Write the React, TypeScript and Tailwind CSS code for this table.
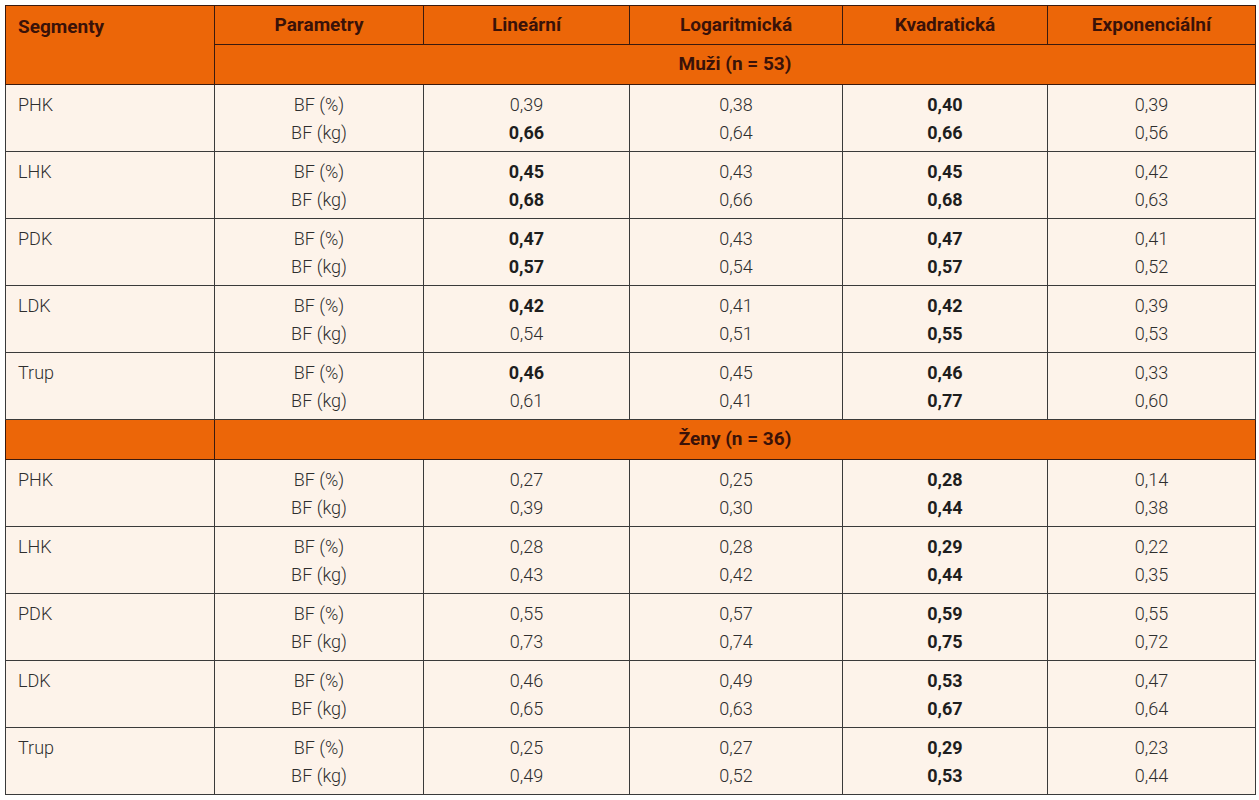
import React from "react";

type Row = { seg: string; pct: [string, boolean][]; kg: [string, boolean][] };

const b = (v: string): [string, boolean] => [v, true];
const n = (v: string): [string, boolean] => [v, false];

const muzi: Row[] = [
  { seg: "PHK", pct: [n("0,39"), n("0,38"), b("0,40"), n("0,39")], kg: [b("0,66"), n("0,64"), b("0,66"), n("0,56")] },
  { seg: "LHK", pct: [b("0,45"), n("0,43"), b("0,45"), n("0,42")], kg: [b("0,68"), n("0,66"), b("0,68"), n("0,63")] },
  { seg: "PDK", pct: [b("0,47"), n("0,43"), b("0,47"), n("0,41")], kg: [b("0,57"), n("0,54"), b("0,57"), n("0,52")] },
  { seg: "LDK", pct: [b("0,42"), n("0,41"), b("0,42"), n("0,39")], kg: [n("0,54"), n("0,51"), b("0,55"), n("0,53")] },
  { seg: "Trup", pct: [b("0,46"), n("0,45"), b("0,46"), n("0,33")], kg: [n("0,61"), n("0,41"), b("0,77"), n("0,60")] },
];

const zeny: Row[] = [
  { seg: "PHK", pct: [n("0,27"), n("0,25"), b("0,28"), n("0,14")], kg: [n("0,39"), n("0,30"), b("0,44"), n("0,38")] },
  { seg: "LHK", pct: [n("0,28"), n("0,28"), b("0,29"), n("0,22")], kg: [n("0,43"), n("0,42"), b("0,44"), n("0,35")] },
  { seg: "PDK", pct: [n("0,55"), n("0,57"), b("0,59"), n("0,55")], kg: [n("0,73"), n("0,74"), b("0,75"), n("0,72")] },
  { seg: "LDK", pct: [n("0,46"), n("0,49"), b("0,53"), n("0,47")], kg: [n("0,65"), n("0,63"), b("0,67"), n("0,64")] },
  { seg: "Trup", pct: [n("0,25"), n("0,27"), b("0,29"), n("0,23")], kg: [n("0,49"), n("0,52"), b("0,53"), n("0,44")] },
];

const headTd = "border border-[#3a1a0e] text-center align-middle";
const bodyTd = "border border-[#3a3a3a] align-top pt-[6px] leading-[28px]";

function DataRows({ rows }: { rows: Row[] }) {
  return (
    <>
      {rows.map((r) => (
        <tr key={r.seg} className="h-[67px]">
          <td className={`${bodyTd} text-left pl-3`}>{r.seg}</td>
          <td className={`${bodyTd} text-center`}>
            <div>BF (%)</div>
            <div>BF (kg)</div>
          </td>
          {r.pct.map((p, i) => (
            <td key={i} className={`${bodyTd} text-center`}>
              <div className={p[1] ? "font-bold text-[#1e1e1e]" : ""}>{p[0]}</div>
              <div className={r.kg[i][1] ? "font-bold text-[#1e1e1e]" : ""}>{r.kg[i][0]}</div>
            </td>
          ))}
        </tr>
      ))}
    </>
  );
}

export default function App() {
  return (
    <div className="w-[1259px] h-[800px] bg-white pt-[5px] pl-[5px]">
      <table
        className="w-[1250px] table-fixed border-collapse bg-[#fdf3ea] text-[18px] font-light text-[#2e2e2e]"
        style={{ fontFamily: "Roboto, 'Liberation Sans', sans-serif" }}
      >
        <colgroup>
          <col className="w-[209px]" />
          <col className="w-[209px]" />
          <col className="w-[206px]" />
          <col className="w-[213px]" />
          <col className="w-[205px]" />
          <col className="w-[208px]" />
        </colgroup>
        <thead>
          <tr className="h-[39px] bg-[#ec6608] font-bold text-[19px] text-[#3a1208]">
            <td rowSpan={2} className="border border-[#3a1a0e] text-left align-top pl-3 pt-[7px]">Segmenty</td>
            <td className={headTd}>Parametry</td>
            <td className={headTd}>Lineární</td>
            <td className={headTd}>Logaritmická</td>
            <td className={headTd}>Kvadratická</td>
            <td className={headTd}>Exponenciální</td>
          </tr>
          <tr className="h-[40px] bg-[#ec6608] font-bold text-[19px] text-[#3a1208]">
            <td colSpan={5} className={headTd}>Muži (n = 53)</td>
          </tr>
        </thead>
        <tbody>
          <DataRows rows={muzi} />
          <tr className="h-[40px] bg-[#ec6608] font-bold text-[19px] text-[#3a1208]">
            <td className={headTd}></td>
            <td colSpan={5} className={headTd}>Ženy (n = 36)</td>
          </tr>
          <DataRows rows={zeny} />
        </tbody>
      </table>
    </div>
  );
}
